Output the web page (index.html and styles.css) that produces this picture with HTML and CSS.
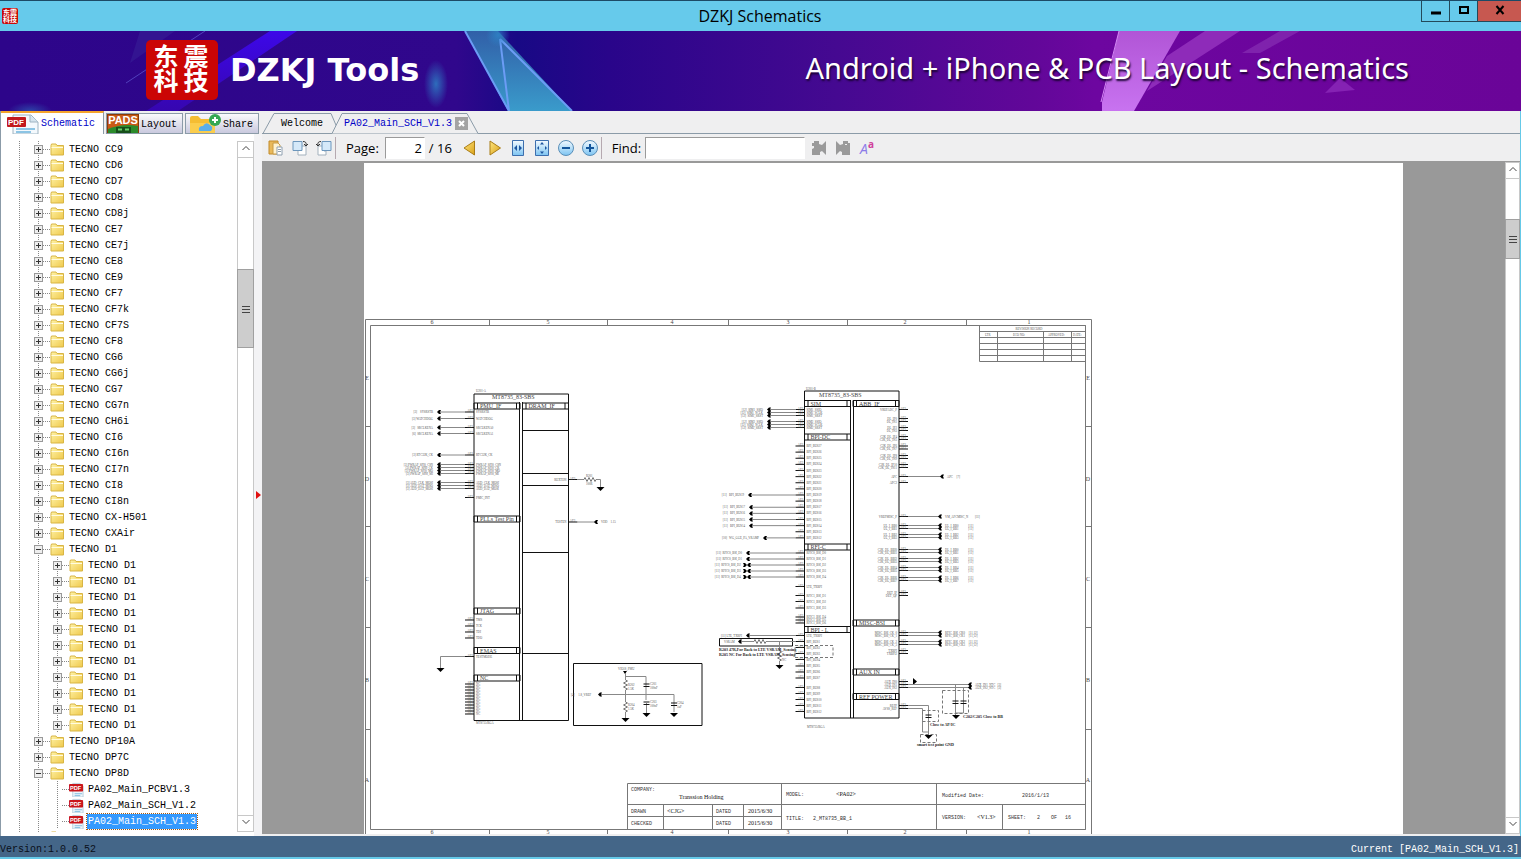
FILE: index.html
```html
<!DOCTYPE html>
<html lang="en">
<head>
<meta charset="UTF-8">
<title>DZKJ Schematics</title>
<link rel="stylesheet" href="styles.css">
</head>
<body>

<!-- shared icons -->
<svg class="defs" aria-hidden="true">
    <defs>
        <linearGradient id="gFolder" x1="0" y1="0" x2="1" y2="1">
            <stop offset="0" stop-color="#fff3a8"/><stop offset="1" stop-color="#efc94c"/>
        </linearGradient>
        <linearGradient id="gGold" x1="0" y1="0" x2="1" y2="1">
            <stop offset="0" stop-color="#ffe680"/><stop offset="1" stop-color="#d9a017"/>
        </linearGradient>
        <linearGradient id="gBlue" x1="0" y1="0" x2="0" y2="1">
            <stop offset="0" stop-color="#f4faff"/><stop offset="1" stop-color="#7cc4f2"/>
        </linearGradient>
        <symbol id="folder" viewBox="0 0 15 13">
            <path d="M1 2.500 1.500 1h4.500l1 1.500h6.500v9.500h-12.500z" fill="url(#gFolder)" stroke="#d8b544"/>
            <path d="M1.500 4.500h11.500" stroke="#fffbe0"/>
        </symbol>
        <symbol id="pdf" viewBox="0 0 16 16">
            <path d="M4 1.500h8l3 3V16H4z" fill="#eef6fc" stroke="#b9cfdd"/>
            <path d="M6 12.500h8M6 14.500h6" stroke="#7dbbdd"/>
            <rect x="0" y="2" width="15" height="8" rx="1" fill="#c9161b"/>
            <text x="7" y="8" class="pdf-text">PDF</text>
        </symbol>
    </defs>
</svg>

<div class="window">
    <header class="titlebar">
        <svg class="app-icon" viewBox="0 0 16 16">
            <rect width="16" height="16" rx="2" fill="#c80808"/>
            <text x="8" y="7" class="seal-small">东震</text>
            <text x="8" y="14" class="seal-small">科技</text>
        </svg>
        <span class="title">DZKJ Schematics</span>
        <div class="win-buttons">
            <button aria-label="Minimize"><svg viewBox="0 0 12 12"><path d="M1 9h10" stroke="#000" stroke-width="3"/></svg></button>
            <button aria-label="Maximize"><svg viewBox="0 0 12 12"><path d="M2 3h8v6H2z" fill="none" stroke="#000" stroke-width="2"/></svg></button>
            <button class="close" aria-label="Close"><svg viewBox="0 0 12 12"><path d="M2.500 2l7 8M9.500 2l-7 8" stroke="#000" stroke-width="2"/></svg></button>
        </div>
    </header>

    <div class="banner">
        <svg class="banner-art" viewBox="0 0 1521 80" preserveAspectRatio="none">
            <defs>
                <linearGradient id="gBanner">
                    <stop offset="0" stop-color="#2d058a"/><stop offset=".3" stop-color="#30078c"/>
                    <stop offset=".34" stop-color="#180985"/><stop offset=".4" stop-color="#29058a"/>
                    <stop offset=".55" stop-color="#450991"/><stop offset=".68" stop-color="#620799"/>
                    <stop offset=".72" stop-color="#6d06a0"/><stop offset="1" stop-color="#6a0498"/>
                </linearGradient>
                <linearGradient id="gShard" x1="0" y1="0" x2="0" y2="1">
                    <stop offset="0" stop-color="#315fa8"/><stop offset="1" stop-color="#3a9bcb"/>
                </linearGradient>
                <linearGradient id="gBeam" x1="0" y1="0" x2="0" y2="1">
                    <stop offset="0" stop-color="#3d08e8"/><stop offset="1" stop-color="#3606b0"/>
                </linearGradient>
                <linearGradient id="gPink" x1="0" y1="0" x2="0" y2="1">
                    <stop offset="0" stop-color="#b155d6"/><stop offset="1" stop-color="#c873f0"/>
                </linearGradient>
                <radialGradient id="gGlow">
                    <stop offset="0" stop-color="#2d86c8" stop-opacity=".8"/><stop offset="1" stop-color="#2d86c8" stop-opacity="0"/>
                </radialGradient>
            </defs>
            <rect width="1521" height="80" fill="url(#gBanner)"/>
            <path d="M270 0h27L178 80h-32z" fill="url(#gBeam)"/>
            <path d="M140 0h35l-45 32z" fill="#3c2a9c" opacity=".4"/>
            <path d="M205 0 126 52" stroke="#6a6ae0" opacity=".6"/>
            <ellipse cx="436" cy="53" rx="12" ry="24" fill="url(#gGlow)"/>
            <ellipse cx="30" cy="80" rx="22" ry="9" fill="url(#gGlow)" opacity=".6"/>
            <path d="M465 0h33l74 80h-64z" fill="url(#gShard)"/>
            <path d="M465 0l44 80M500 8l9 72M500 8l72 72" stroke="#6b9cf5" stroke-width="2" fill="none"/>
            <circle cx="498" cy="4" r="12" fill="url(#gGlow)"/>
            <path d="M1119 0h61l-46 80h-32v-9z" fill="url(#gPink)"/>
            <path d="M1119 0l-18 71" stroke="#d58af5"/>
            <path d="M1205 0h35l-93 60 20-35z" fill="#a545cc" opacity=".6"/>
            <path d="M1280 0h20l-40 22h-18z" fill="#8c35b8" opacity=".6"/>
            <path d="M1340 47l15 12-30 3z" fill="#8522b3"/>
        </svg>
        <svg class="seal" viewBox="0 0 72 60">
            <rect width="72" height="60" rx="5" fill="#cb0505"/>
            <text x="20" y="26" class="seal-text">东</text>
            <text x="50" y="26" class="seal-text">震</text>
            <text x="20" y="50" class="seal-text">科</text>
            <text x="50" y="50" class="seal-text">技</text>
        </svg>
        <h1>DZKJ Tools</h1>
        <p>Android + iPhone &amp; PCB Layout - Schematics</p>
    </div>

    <main>
        <aside class="side">
            <nav class="side-tabs">
                <button class="side-tab active">
                    <svg class="tab-icon" viewBox="0 0 32 20">
                        <path d="M6 1h18l7 7v12H6z" fill="#f4f9fd" stroke="#9fb4c2"/>
                        <path d="M23 1v7h8" fill="#d5e4ee" stroke="#9fb4c2"/>
                        <path d="M9 15h19M9 18h15" stroke="#8cc4e4" stroke-width="2"/>
                        <rect x="0" y="3" width="19" height="10" rx="1" fill="#c2191d"/>
                        <text x="9" y="11" class="tab-pdf">PDF</text>
                    </svg>
                    Schematic
                </button>
                <button class="side-tab">
                    <svg class="tab-icon" viewBox="0 0 32 20">
                        <rect x=".5" y=".5" width="31" height="20" fill="#c85a16" stroke="#8a3a08"/>
                        <path d="M1 15q15-6 30-3v8H1z" fill="#2b8b2b"/>
                        <path d="M9 13h15v7H9z" fill="#164f1a"/>
                        <path d="M11 15.500h4M18 15.500h4" stroke="#6ad06a" stroke-width="2"/>
                        <text x="16" y="10" class="pads">PADS</text>
                    </svg>
                    Layout
                </button>
                <button class="side-tab share">
                    <svg class="tab-icon" viewBox="0 0 32 20">
                        <path d="M1 20V4q0-2 2-2h6l3 3h12q2 0 2 2v13z" fill="#f5bd32"/>
                        <path d="M1 20V9h25v11z" fill="#fbcd4c"/>
                        <path d="M10 17q-1-5 4-5 3-5 7-1 4 2 1 6z" fill="#5aaeea"/>
                        <circle cx="26" cy="6" r="6" fill="#35a853"/>
                        <path d="M26 3v6M23 6h6" stroke="#fff" stroke-width="2"/>
                    </svg>
                    Share
                </button>
            </nav>
            <div class="side-body">
                <div class="tree" id="tree"></div>
                <div class="scrollbar side-scroll">
                    <button aria-label="Scroll up"><svg viewBox="0 0 10 10"><path d="M1.500 7 5 3.500 8.500 7"/></svg></button>
                    <span class="track-a"></span>
                    <span class="thumb"><svg viewBox="0 0 10 10"><path d="M1 2.500h8M1 5.500h8M1 8.500h8"/></svg></span>
                    <span class="track-b"></span>
                    <button aria-label="Scroll down"><svg viewBox="0 0 10 10"><path d="M1.500 3 5 6.500 8.500 3"/></svg></button>
                </div>
                <div class="splitter"><svg viewBox="0 0 5 8"><path d="M0 0l5 4-5 4z" fill="#e01010"/></svg></div>
            </div>
        </aside>

        <section class="content">
            <nav class="doc-tabs">
                <button class="doc-tab welcome">
                    <svg viewBox="0 0 76 21" preserveAspectRatio="none"><path d="M1 20.500 12 .5h57l6 14"/></svg>
                    <span>Welcome</span>
                </button>
                <div class="doc-tab current">
                    <svg viewBox="0 0 146 21" preserveAspectRatio="none"><path d="M0 20.500 10 .5h125l11 20" class="front"/></svg>
                    <span>PA02_Main_SCH_V1.3</span>
                    <button class="tab-close" aria-label="Close tab"><svg viewBox="0 0 13 13"><path d="M4 4l5 5M9 4l-5 5" stroke="#fff" stroke-width="2"/></svg></button>
                </div>
            </nav>

            <div class="toolbar">
                <button aria-label="Open"><svg viewBox="0 0 16 16"><path d="M1 1h9v13H1z" fill="#e9b95a" stroke="#c18a2a"/><path d="M5 3h5l2 2v9H5z" fill="#fff2d0" stroke="#c89b45"/><path d="M9 7h5v8H9z" fill="#fff" stroke="#8fa0b0"/><path d="M10 9.500h3M10 11.500h3" stroke="#8fa0b0"/></svg></button>
                <button aria-label="Rotate left"><svg viewBox="0 0 16 16"><path d="M8 6h6v9H6v-4" fill="#fff" stroke="#a3b1bd"/><path d="M1 1.500h9v9H1z" fill="#d5e9f9" stroke="#6d97bd"/><path d="M11 1.500q4 0 3 4M12 4l2 2 2-2" fill="none" stroke="#333"/></svg></button>
                <button aria-label="Rotate right"><svg viewBox="0 0 16 16"><path d="M2 6h6v5h2v4H2z" fill="#fff" stroke="#a3b1bd"/><path d="M6 1.500h9v9H6z" fill="#d5e9f9" stroke="#6d97bd"/><path d="M5 1.500Q1 1.500 2 5.500M0 4l2 2 2-2" fill="none" stroke="#333"/></svg></button>
                <span class="sep"></span>
                <label for="page">Page:</label>
                <input id="page" class="page-input" value="2">
                <span class="page-total">/ 16</span>
                <button aria-label="Previous page"><svg viewBox="0 0 16 16"><path d="M12.500 1v14L2 8z" fill="url(#gGold)" stroke="#a97c16"/></svg></button>
                <button aria-label="Next page"><svg viewBox="0 0 16 16"><path d="M4 1v14L14.500 8z" fill="url(#gGold)" stroke="#a97c16"/></svg></button>
                <button aria-label="Fit width"><svg viewBox="0 0 16 16"><path d="M2.500.5h11v15h-11z" fill="url(#gBlue)" stroke="#3d6fae"/><path d="M7 5v6L4 8zM9 5v6l3-3z" fill="#1d55a0"/></svg></button>
                <button aria-label="Fit page"><svg viewBox="0 0 16 16"><path d="M1.500.5h13v15h-13z" fill="url(#gBlue)" stroke="#3d6fae"/><path d="M8 2l2 2.500H6zM8 14l2-2.500H6zM3 8l2-2v4zM13 8l-2-2v4z" fill="#1d55a0"/></svg></button>
                <button aria-label="Zoom out"><svg viewBox="0 0 16 16"><circle cx="8" cy="8" r="7.500" fill="url(#gBlue)" stroke="#5b8fb8"/><path d="M4 8h8" stroke="#14559b" stroke-width="2"/></svg></button>
                <button aria-label="Zoom in"><svg viewBox="0 0 16 16"><circle cx="8" cy="8" r="7.500" fill="url(#gBlue)" stroke="#5b8fb8"/><path d="M4 8h8M8 4v8" stroke="#14559b" stroke-width="2"/></svg></button>
                <span class="sep"></span>
                <label for="find">Find:</label>
                <input id="find" class="find-input">
                <button aria-label="Find previous"><svg viewBox="0 0 16 16"><path d="M1 3h2V1h5v3l3 1 4-4v14l-4-4-2 1v3H1V9l2-1V6H1z" fill="#9a9a9a"/></svg></button>
                <button aria-label="Find next"><svg viewBox="0 0 16 16"><path d="M15 3h-2V1H8v3L5 5 1 1v14l4-4 2 1v3h8V6z" fill="#9a9a9a"/><path d="M10 4.500h2" stroke="#eee"/></svg></button>
                <button aria-label="Match case"><svg viewBox="0 0 16 16"><text x="1" y="14" class="case-a">A</text><text x="9" y="8" class="case-b">a</text></svg></button>
            </div>

            <div class="viewer">
                <div class="sheet-area">
                    <div class="sheet">
                        <svg id="drawing" viewBox="364 319 1039 515" preserveAspectRatio="xMinYMin slice"></svg>
                    </div>
                </div>
                <div class="scrollbar view-scroll">
                    <button aria-label="Scroll up"><svg viewBox="0 0 10 10"><path d="M1.500 7 5 3.500 8.500 7"/></svg></button>
                    <span class="track-a"></span>
                    <span class="thumb"><svg viewBox="0 0 10 10"><path d="M1 2.500h8M1 5.500h8M1 8.500h8"/></svg></span>
                    <span class="track-b"></span>
                    <button aria-label="Scroll down"><svg viewBox="0 0 10 10"><path d="M1.500 3 5 6.500 8.500 3"/></svg></button>
                </div>
            </div>
        </section>
    </main>

    <footer class="status">
        <span>Version:1.0.0.52</span>
        <span>Current [PA02_Main_SCH_V1.3]</span>
    </footer>
</div>

<script src="app.js"></script>
</body>
</html>
```
FILE: styles.css
```css
* { box-sizing: border-box; }
body {
    margin: 0;
    font-family: "Liberation Mono", "Noto Sans CJK SC", monospace;
    font-size: 10px;
    color: #000;
}
button {
    font: inherit;
    color: inherit;
    background: none;
    border: 0;
    padding: 0;
}
.defs { position: absolute; width: 0; height: 0; }
.window {
    display: flex;
    flex-direction: column;
    height: 100vh;
    background: #efeff0;
    border-bottom: 2px solid #65c9e8;
}

/* title bar */
.titlebar {
    display: flex;
    align-items: center;
    height: 31px;
    flex: none;
    background: #66caeb;
    border-top: 1px solid #1c4a66;
}
.app-icon { width: 16px; height: 16px; margin-left: 2px; overflow: visible; }
.seal-small {
    font: 700 7px "Noto Sans CJK SC", sans-serif;
    fill: #fff;
    text-anchor: middle;
}
.title {
    flex: 1;
    padding-left: 81px;
    text-align: center;
    font: 16px "Open Sans", sans-serif;
}
.win-buttons {
    display: flex;
    align-self: flex-start;
}
.win-buttons button {
    width: 28px;
    height: 21px;
    border: 1px solid #23495a;
    border-top: 0;
    border-right: 0;
}
.win-buttons .close { width: 44px; background: #c75850; }
.win-buttons svg { width: 12px; height: 12px; }

/* banner */
.banner {
    position: relative;
    display: flex;
    align-items: center;
    height: 80px;
    flex: none;
    padding: 0 112px 2px 146px;
    color: #fff;
}
.banner-art {
    position: absolute;
    inset: 0;
    width: 100%;
    height: 100%;
}
.seal, .banner h1, .banner p { position: relative; }
.seal { width: 72px; height: 60px; overflow: visible; }
.seal-text {
    font: 700 25px "Noto Sans CJK SC", sans-serif;
    fill: #fff;
    text-anchor: middle;
}
.banner h1 {
    margin: 0 0 0 12px;
    font: 700 32px "DejaVu Sans", sans-serif;
    white-space: nowrap;
}
.banner p {
    margin: 0 0 6px auto;
    font: 29px "Noto Sans", sans-serif;
    white-space: nowrap;
    text-shadow: 1px 2px 2px #1a0433;
}

main {
    display: flex;
    flex: 1;
    min-height: 0;
    border-right: 1px solid #65c9e8;
}

/* left panel */
.side {
    display: flex;
    flex-direction: column;
    width: 262px;
    flex: none;
    border-left: 1px solid #8b9ba8;
}
.side-tabs {
    display: flex;
    align-items: flex-end;
    gap: 2px;
    height: 23px;
    flex: none;
}
.side-tab {
    display: flex;
    align-items: center;
    gap: 2px;
    height: 21px;
    padding: 1px 5px 0 0;
    border: 1px solid #8b9ba8;
    background: linear-gradient(#fafafc, #c9c9de);
    overflow: hidden;
}
.side-tab.active {
    height: 23px;
    padding: 0 8px 0 6px;
    border-width: 2px 1px 0 0;
    border-top-color: #f5a42c;
    background: #fff;
    color: #0000c8;
}
.side-tab.share { padding-left: 3px; }
.tab-icon { width: 32px; height: 20px; }
.tab-pdf, .pads, .pdf-text {
    font: 700 8px "Liberation Sans", sans-serif;
    fill: #fff;
    text-anchor: middle;
}
.pads { font-size: 11px; }
.pdf-text { font-size: 6px; }
.side-body {
    display: flex;
    flex: 1;
    min-height: 0;
    padding: 7px 0 4px;
    background: #fff;
}
.tree {
    flex: 1;
    overflow: hidden;
    background: repeating-linear-gradient(#888 0 1px, #fff 1px 2px) 18px 0 / 1px 100% no-repeat;
}
.row {
    display: flex;
    align-items: center;
    height: 16px;
    padding-left: 33px;
    white-space: nowrap;
    background: repeating-linear-gradient(#888 0 1px, transparent 1px 2px) 37px 0 / 1px 100% no-repeat;
}
.row.deep {
    padding-left: 52px;
    background:
        repeating-linear-gradient(#888 0 1px, transparent 1px 2px) 37px 0 / 1px 100% no-repeat,
        repeating-linear-gradient(#888 0 1px, transparent 1px 2px) 56px 0 / 1px 100% no-repeat;
}
.toggle {
    width: 9px;
    height: 9px;
    border: 1px solid #999;
    background:
        linear-gradient(#333, #333) center / 5px 1px no-repeat,
        linear-gradient(#333, #333) center / 1px 5px no-repeat,
        #eee;
}
.toggle.open {
    background: linear-gradient(#333, #333) center / 5px 1px no-repeat, #eee;
}
.toggle.none { border: 0; background: none; }
.dots {
    width: 7px;
    height: 1px;
    background: repeating-linear-gradient(90deg, #888 0 1px, transparent 1px 2px);
}
.row svg { width: 15px; height: 13px; }
.row svg.file { height: 15px; }
.row span { margin-left: 3px; padding: 0 1px; line-height: 15px; }
.row .selected {
    background: #3399ff;
    color: #fff;
    outline: 1px dotted #a65a10;
}

/* scroll bars */
.scrollbar {
    display: flex;
    flex-direction: column;
    width: 17px;
    flex: none;
    background: #fff;
    border: 1px solid #c8c8c8;
}
.scrollbar button {
    height: 16px;
    flex: none;
    border-bottom: 1px solid #c8c8c8;
}
.scrollbar button:last-child { border: 0; border-top: 1px solid #c8c8c8; }
.scrollbar svg {
    width: 10px;
    height: 10px;
    fill: none;
    stroke: #444;
}
.thumb {
    display: flex;
    align-items: center;
    justify-content: center;
    background: #cdcdcd;
    border: 1px solid #a0a0a0;
    margin: 0 -1px;
}
.side-scroll .track-a { flex: 111; }
.side-scroll .thumb { flex: 78; }
.side-scroll .track-b { flex: 468; }
.view-scroll { width: 15px; }
.view-scroll .track-a { flex: 40; }
.view-scroll .thumb { flex: 39; }
.view-scroll .track-b { flex: 562; }
.splitter {
    display: flex;
    align-items: center;
    justify-content: flex-end;
    width: 8px;
    margin: -7px 0 -4px;
    padding: 20px 1px 0 0;
    background: #f3f3f5;
}
.splitter svg { width: 5px; height: 8px; }

/* document tabs */
.content {
    display: flex;
    flex-direction: column;
    flex: 1;
    min-width: 0;
    padding-bottom: 2px;
}
.doc-tabs {
    display: flex;
    align-items: flex-end;
    height: 23px;
    flex: none;
    border-bottom: 1px solid #8b9ba8;
}
.doc-tab {
    position: relative;
    display: flex;
    align-items: center;
    height: 21px;
    margin-bottom: -1px;
}
.doc-tab > svg {
    position: absolute;
    inset: 0;
    width: 100%;
    height: 100%;
    fill: none;
    stroke: #8b9ba8;
}
.doc-tab .front { fill: #efeff0; }
.doc-tab > span { position: relative; }
.welcome { width: 76px; padding-left: 19px; }
.current {
    width: 146px;
    margin-left: -6px;
    padding-left: 12px;
    gap: 3px;
    color: #0000c8;
}
.tab-close {
    position: relative;
    width: 13px;
    height: 13px;
    background: #a3a3a3;
}
.tab-close svg { display: block; }

/* toolbar */
.toolbar {
    display: flex;
    align-items: center;
    height: 28px;
    flex: none;
    padding-left: 6px;
    gap: 8px;
    font: 13px "Open Sans", sans-serif;
    border-bottom: 1px solid #999;
}
.toolbar button { width: 16px; height: 16px; flex: none; }
.toolbar button svg { display: block; width: 16px; height: 16px; overflow: visible; }
.sep {
    width: 1px;
    height: 22px;
    margin: 0 2px 0 -5px;
    background: #b5a9b0;
}
.toolbar input {
    height: 22px;
    font: inherit;
    border: 1px solid #9a9a9a;
    border-right-color: #fff;
    border-bottom-color: #fff;
    background: #fff;
}
.page-input { width: 40px; margin-left: -2px; text-align: right; }
.page-total { margin: 0 2px 0 -4px; }
.find-input { width: 160px; margin-left: -4px; margin-right: -2px; }
.case-a { font: italic 14px "Open Sans", sans-serif; fill: #8c7be8; }
.case-b { font: 700 10px "Open Sans", sans-serif; fill: #d0409c; }

/* page viewer */
.viewer {
    display: flex;
    flex: 1;
    min-height: 0;
}
.sheet-area {
    flex: 1;
    min-width: 0;
    overflow: hidden;
    padding: 1px 102px 0;
    background: #999;
}
.sheet {
    height: 100%;
    padding-top: 156px;
    background: #fff;
}
#drawing { display: block; width: 100%; }
#drawing text { font: 3px "Liberation Serif", serif; fill: #555; white-space: pre; }
#drawing .tag { font-size: 6px; fill: #444; }
#drawing .bold { font-size: 4px; font-weight: 700; fill: #222; }
#drawing .mono { font: 5px "Liberation Mono", monospace; fill: #333; }
#drawing .value { font-size: 6px; fill: #111; }
#drawing path { fill: none; stroke: #000; }
#drawing .thin { stroke: #777; stroke-width: 1; }
#drawing .wire { stroke: #888; }
#drawing .heavy { stroke: #111; }
#drawing .dash { stroke: #777; stroke-dasharray: 3 2; }
#drawing .solid { fill: #000; stroke: none; }

/* status bar */
.status {
    display: flex;
    justify-content: space-between;
    align-items: flex-end;
    height: 21px;
    flex: none;
    padding-right: 2px;
    background: #446688;
    color: #0a0f18;
}
.status span { line-height: 15px; }
.status span:last-child { color: #fff; }
```
FILE: app.js
```js
// folder tree: names before D1, then the open branches
const models = ["CC9", "CD6", "CD7", "CD8", "CD8j", "CE7", "CE7j", "CE8", "CE9", "CF7",
    "CF7k", "CF7S", "CF8", "CG6", "CG6j", "CG7", "CG7n", "CH6i", "CI6", "CI6n", "CI7n",
    "CI8", "CI8n", "CX-H501", "CXAir"];
const files = ["PA02_Main_PCBV1.3", "PA02_Main_SCH_V1.2", "PA02_Main_SCH_V1.3"];

function row(name, toggle, deep, file, selected) {
    return `<div class="row ${deep ? "deep" : ""}"><i class="toggle ${toggle}"></i><i class="dots"></i>` +
        `<svg class="${file ? "file" : ""}"><use href="#${file ? "pdf" : "folder"}"/></svg>` +
        `<span class="${selected ? "selected" : ""}">${name}</span></div>`;
}

let rows = models.map(m => row("TECNO " + m, "", false));
rows.push(row("TECNO D1", "open", false));
for (let i = 0; i < 11; i++) rows.push(row("TECNO D1", "", true));
rows.push(row("TECNO DP10A", "", false));
rows.push(row("TECNO DP7C", "", false));
rows.push(row("TECNO DP8D", "open", false));
files.forEach((f, i) => rows.push(row(f, "none", true, true, i === 2)));
rows.push(row("", "", false));
document.getElementById("tree").innerHTML = rows.join("");

// schematic sheet
let out = "";
function path(d, cls) { out += `<path d="${d}" class="${cls}"/>`; }
function text(x, y, s, cls, anchor) {
    s = s.replace(/</g, "&lt;").replace(/>/g, "&gt;");
    out += `<text x="${x}" y="${y}" class="${cls || ""}" text-anchor="${anchor || "start"}">${s}</text>`;
}
function box(x1, y1, x2, y2, cls) { path(`M${x1} ${y1}H${x2}V${y2}H${x1}z`, cls); }
function ground(x, y) { path(`M${x - 4} ${y}h8l-4 4z`, "solid"); }
function port(x, y) { path(`M${x - 2} ${y}l2-2h2l-1 2 1 2h-2z`, "solid"); }
function cap(x, y) { path(`M${x - 3} ${y - 1}h6M${x - 3} ${y + 1.5}h6`, "heavy"); }
function zigV(x, y) { path(`M${x} ${y}l2 1-4 2 4 2-4 2 4 2-2 1`, "thin"); }
function zigH(x, y) { path(`M${x} ${y}l1-2 2 4 2-4 2 4 2-4 2 4 1-2`, "thin"); }
function bar(x, y, label) {
    box(x, y, x + 46, y + 6, "heavy");
    path(`M${x + 3.5} ${y}v6M${x + 42.5} ${y}v6`, "heavy");
    text(x + 6, y + 5, label, "tag");
}
// pin on the left edge of a chip, with an optional wire to a port
function pinL(x, y, label, wireTo, net) {
    path(`M${x - 9} ${y}H${x}`, "heavy");
    text(x + 2, y + 1, label);
    text(x - 4, y, "AE2", "", "middle");
    if (wireTo) {
        path(`M${wireTo} ${y}H${x - 9}`, "wire");
        port(wireTo, y);
        text(wireTo - 6, y + 1, net, "", "end");
    }
}
function pinR(x, y, label, wireTo, net) {
    path(`M${x} ${y}h9`, "heavy");
    text(x - 2, y + 1, label, "", "end");
    text(x + 4, y, "AF3", "", "middle");
    if (wireTo) {
        path(`M${x + 9} ${y}H${wireTo}`, "wire");
        port(wireTo, y);
        text(wireTo + 5, y + 1, net);
    }
}

// frame and zone marks
box(365.5, 319.5, 1091.5, 840, "thin");
box(370.5, 325.5, 1085.5, 829.5, "thin");
[489.5, 607.5, 728.5, 847.5, 966.5].forEach(x => path(`M${x} 320v5M${x} 829v5`, "thin"));
[432, 548, 672, 788, 905, 1029].forEach((x, i) => {
    text(x, 324, String(6 - i), "tag", "middle");
    text(x, 834, String(6 - i), "tag", "middle");
});
[426.5, 526.5, 627.5, 729.5].forEach(y => path(`M365 ${y}h5M1086 ${y}h5`, "thin"));
["E", "D", "C", "B", "A"].forEach((s, i) => {
    text(367, 380 + i * 100.5, s, "tag", "middle");
    text(1088, 380 + i * 100.5, s, "tag", "middle");
});

// revision table
box(979.5, 325.5, 1085.5, 361.5, "thin");
[331.5, 337.5, 343.5, 349.5, 355.5].forEach(y => path(`M979.5 ${y}H1085`, "thin"));
path("M997.5 331.5V361M1043.5 331.5V361M1071.5 331.5V361", "thin");
text(1029, 330, "REVISION RECORD", "", "middle");
text(985, 336, "LTR");
text(1013, 336, "ECO NO:");
text(1048, 336, "APPROVED:");
text(1073, 336, "DATE:");

// left chip
box(474, 394, 568.5, 720.5, "heavy");
path("M519.5 402V720M522.5 402V720M523 430.5h45M523 473.5h45M523 485.5h45M523 552.5h45M523 653.5h45", "heavy");
text(476, 392, "U201-A");
text(492, 399, "MT8735_83-SBS", "tag");
text(476, 724, "MT8735/BGA", "");
bar(474, 403, "PMU_IF");
bar(522.5, 403, "DRAM_IF");
bar(474, 516, "PLLs Test Pin");
bar(474, 608, "JTAG");
bar(474, 647.5, "EMAS");
bar(474, 675, "NC");
[[412, "SYSRSTB", "[3]    SYSRSTB"], [418.5, "WATCHDOG", "[3] WATCHDOG"], [427.5, "SRCLKENA0", "[3]   SRCLKENA"],
 [433.5, "SRCLKENA1", "[6]  SRCLKENA"], [455, "RTC32K_CK", "[3] RTC32K_CK"], [464.5, "PWRAP_SPI0_CSN", "[3] PWRAP_SPI0_CSN"],
 [467.5, "PWRAP_SPI0_CK", "[3] PWRAP_SPI0_CK"], [470.5, "PWRAP_SPI0_MO", "[3] PWRAP_SPI0_MO"], [473.5, "PWRAP_SPI0_MI", "[3] PWRAP_SPI0_MI"],
 [482.5, "AUD_CLK_MOSI", "[3] AUD_CLK_MOSI"], [485.5, "AUD_DAT_MISO", "[3] AUD_DAT_MISO"], [488.5, "AUD_DAT_MOSI", "[3] AUD_DAT_MOSI"]
].forEach(p => pinL(474, p[0], p[1], 439, p[2]));
pinL(474, 497.5, "PMIC_INT");
["TMS", "TCK", "TDI", "TDO"].forEach((s, i) => pinL(474, 620 + i * 6, s));
pinL(474, 656.5, "TESTMODE");
path("M465 656.5H440.5V669", "wire");
ground(440.5, 668);
for (let i = 0; i < 11; i++) pinL(474, 684 + i * 3, "NC");
pinR(568.5, 479.5, "REXTDN");
path("M577 479.5h7M596 479.5h4.5V487", "wire");
zigH(584, 479.5);
text(586, 477, "R201");
text(586, 485, "100R");
ground(600.5, 487);
pinR(568.5, 522, "TESTEN", 596, "VDD    1.15");

// power filter block
box(573.5, 663.5, 702, 725.5, "heavy");
text(618, 670, "VIO18_PMU");
path("M623 671h4l-2 3z", "solid");
path("M625.5 673v7M625.5 676.5H646V700M625.5 690v12M625.5 712v6M646.5 703v10M600 694.5H674V712", "wire");
zigV(625.5, 680);
zigV(625.5, 702);
cap(646.5, 685);
cap(646.5, 703);
cap(674, 704);
ground(625.5, 718);
ground(646.5, 713);
ground(674, 713);
port(600, 694.5);
text(571, 696, "[4]     1.8_VREF");
[[628, 686, "R202"], [628, 690, "1.5K"], [650, 685, "C201"], [650, 689, "100nF"], [628, 706, "R204"], [628, 710, "1.5K"],
 [650, 703, "C203"], [650, 707, "100nF"], [677, 704, "C204"], [677, 708, "1uF"]].forEach(t => text(...t));

// right chip
box(804.5, 391, 899, 718, "heavy");
path("M850.5 400V718M853.5 400V718", "heavy");
text(806, 390, "U201-B");
text(819, 397, "MT8735_83-SBS", "tag");
text(807, 728, "MT8735/BGA");
bar(804.5, 400.5, "SIM");
bar(804.5, 434, "BPI-DC");
bar(804.5, 544, "RFI-C");
bar(804.5, 626.5, "BPI - L");
bar(853, 400.5, "ABB_IF");
bar(853, 620, "MISC-BSI");
bar(853, 669, "AUX IN");
bar(853, 693.5, "REF POWER");
[409.5, 412.5, 415.5, 421.5, 424.5, 427.5].forEach((y, i) => {
    const s = ["SIO", "CLK", "RST"][i % 3];
    pinL(804.5, y, `SIM${i < 3 ? 1 : 2}_S${s}`, 769, `[12]  SIM${i < 3 ? 1 : 2}_S${s}`);
});
const bpiWires = { 8: 750, 10: 751, 11: 751, 12: 751, 13: 751, 15: 765 };
for (let i = 0; i < 16; i++) {
    const n = 27 - i;
    pinL(804.5, 446 + i * 6.125, "BPI_BUS" + n, bpiWires[i], i === 15 ? "[10]   WG_GGE_PA_VRAMP" : "[11]   BPI_BUS" + n);
}
for (let i = 0; i < 5; i++) {
    const y = 553 + i * 6;
    pinL(804.5, y, "RFIC0_BSI_D" + i, i < 2 ? 748 : 749, "[11]  RFIC0_BSI_D" + i + (i < 2 ? "" : "   "));
    if (i > 1) path(`M747 ${y}l-2-2h-2l1 2-1 2h2z`, "solid");
}
[586.5, 595.5, 601.5, 608, 617, 620, 623].forEach((y, i) => pinL(804.5, y, i ? "RFIC1_BSI_D" + i : "LTE_TXBPI"));
pinL(804.5, 635.5, "LTE_TXBPI", 748, "[11] LTE_TXBPI");
[641.5, 647.5, 653.5, 659.5, 666, 672, 678, 687.5, 693.5, 699.5, 705.5, 711.5].forEach((y, i) => pinL(804.5, y, "BPI_BUS" + (i + 1)));
box(719.5, 638.5, 792.5, 646, "heavy");
path("M740 641.5h14M766 641.5h29M779.5 642v9M779.5 661v5", "wire");
port(740, 641.5);
zigH(754, 641.5);
zigV(779.5, 651);
ground(779.5, 665);
text(724, 643, "VSRAM");
text(782, 661, "NC");
text(719, 651, "R203 47R,For Back to LTE VSRAM_Sensing", "bold");
text(719, 656, "R205 NC For Back to LTE VSRAM_Sensing", "bold");
box(795, 645.5, 833, 657.5, "dash");

pinR(899, 409.5, "VREFADC_P");
[418.5, 421.5, 427.5, 430.5, 436.5, 439.5, 446, 449, 455.5, 458.5, 464.5, 467.5].forEach((y, i) =>
    pinR(899, y, (i < 4 ? "DL_I" : "C2K_DL_I") + (i % 2 ? "N" : "P") + i));
pinR(899, 476.5, "APC", 942, "APC     [7]");
pinR(899, 482.5, "APC2");
pinR(899, 516.5, "VREFMISC_P", 940, "VM_AFCMISC_N         [11]");
[525.5, 528.5, 534.5, 537.5].forEach((y, i) => pinR(899, y, "UL_I_BB" + i, 940, "UL_I_BB" + i + "             [11]"));
[549.5, 552.5, 558.5, 561.5, 567.5, 570.5, 577.5, 580.5].forEach((y, i) => pinR(899, y, "C2K_DL_BBI" + i, 940, "DL_I_BB" + i + "             [11]"));
pinR(899, 592.5, "DET_IP");
pinR(899, 595.5, "DET_QP");
[632.5, 635.5, 641.5, 644.5].forEach((y, i) => pinR(899, y, "MISC_BSI_CK_" + i, 940, "RFIC_BSI_CK" + i + "     [11,12]"));
pinR(899, 650.5, "TXBPI");
pinR(899, 653.5, "TXBPI2");
pinR(899, 681.5, "AUX_IN0");
path("M913 678l4 3.5-4 3.5z", "solid");
pinR(899, 684.5, "AUX_IN1", 970, "AUX_IN1_NTC   [3]");
pinR(899, 687.5, "AUX_IN2", 970, "AUX_IN2_NTC   [3]");
pinR(899, 705.5, "REFP");
pinR(899, 708.5, "AVSS_REF");
path("M908 705.5H928.5V736M908 708.5H922.5V732H928M955.5 685V716M963.5 688V713H956", "wire");
cap(928.5, 716);
cap(955.5, 702);
cap(963.5, 702);
box(942.5, 690.5, 968.5, 713.5, "dash");
box(922.5, 710.5, 938.5, 721.5, "dash");
box(920.5, 734.5, 936.5, 742.5, "dash");
ground(956, 715);
ground(928.5, 735);
text(963, 718, "C202/C205 Close to BB", "bold");
text(930, 726, "Close to AP/IC", "bold");
text(917, 746, "smart test point GND", "bold");

// title block
box(627.5, 783.5, 1085.5, 829.5, "thin");
path("M781.5 783V829M936.5 783V829M627 804.5H1085M627 816.5H781M663.5 804V829M712.5 804V829M743.5 804V829M1002.5 804V829", "thin");
[[631, 791, "COMPANY:"], [631, 813, "DRAWN"], [631, 825, "CHECKED"], [716, 813, "DATED"], [716, 825, "DATED"],
 [786, 796, "MODEL:"], [786, 820, "TITLE:"], [813, 820, "2_MT8735_BB_1"], [942, 797, "Modified Date:"], [1022, 797, "2016/1/13"],
 [942, 819, "VERSION:"], [1008, 819, "SHEET:"], [1037, 819, "2"], [1051, 819, "OF"], [1065, 819, "16"]
].forEach(t => text(...t, "mono"));
[[679, 799, "Transsion Holding"], [667, 813, "<CJG>"], [748, 813, "2015/6/30"], [748, 825, "2015/6/30"],
 [836, 796, "<PA02>"], [977, 819, "<V1.3>"]].forEach(t => text(...t, "value"));

document.getElementById("drawing").innerHTML = out;
```
